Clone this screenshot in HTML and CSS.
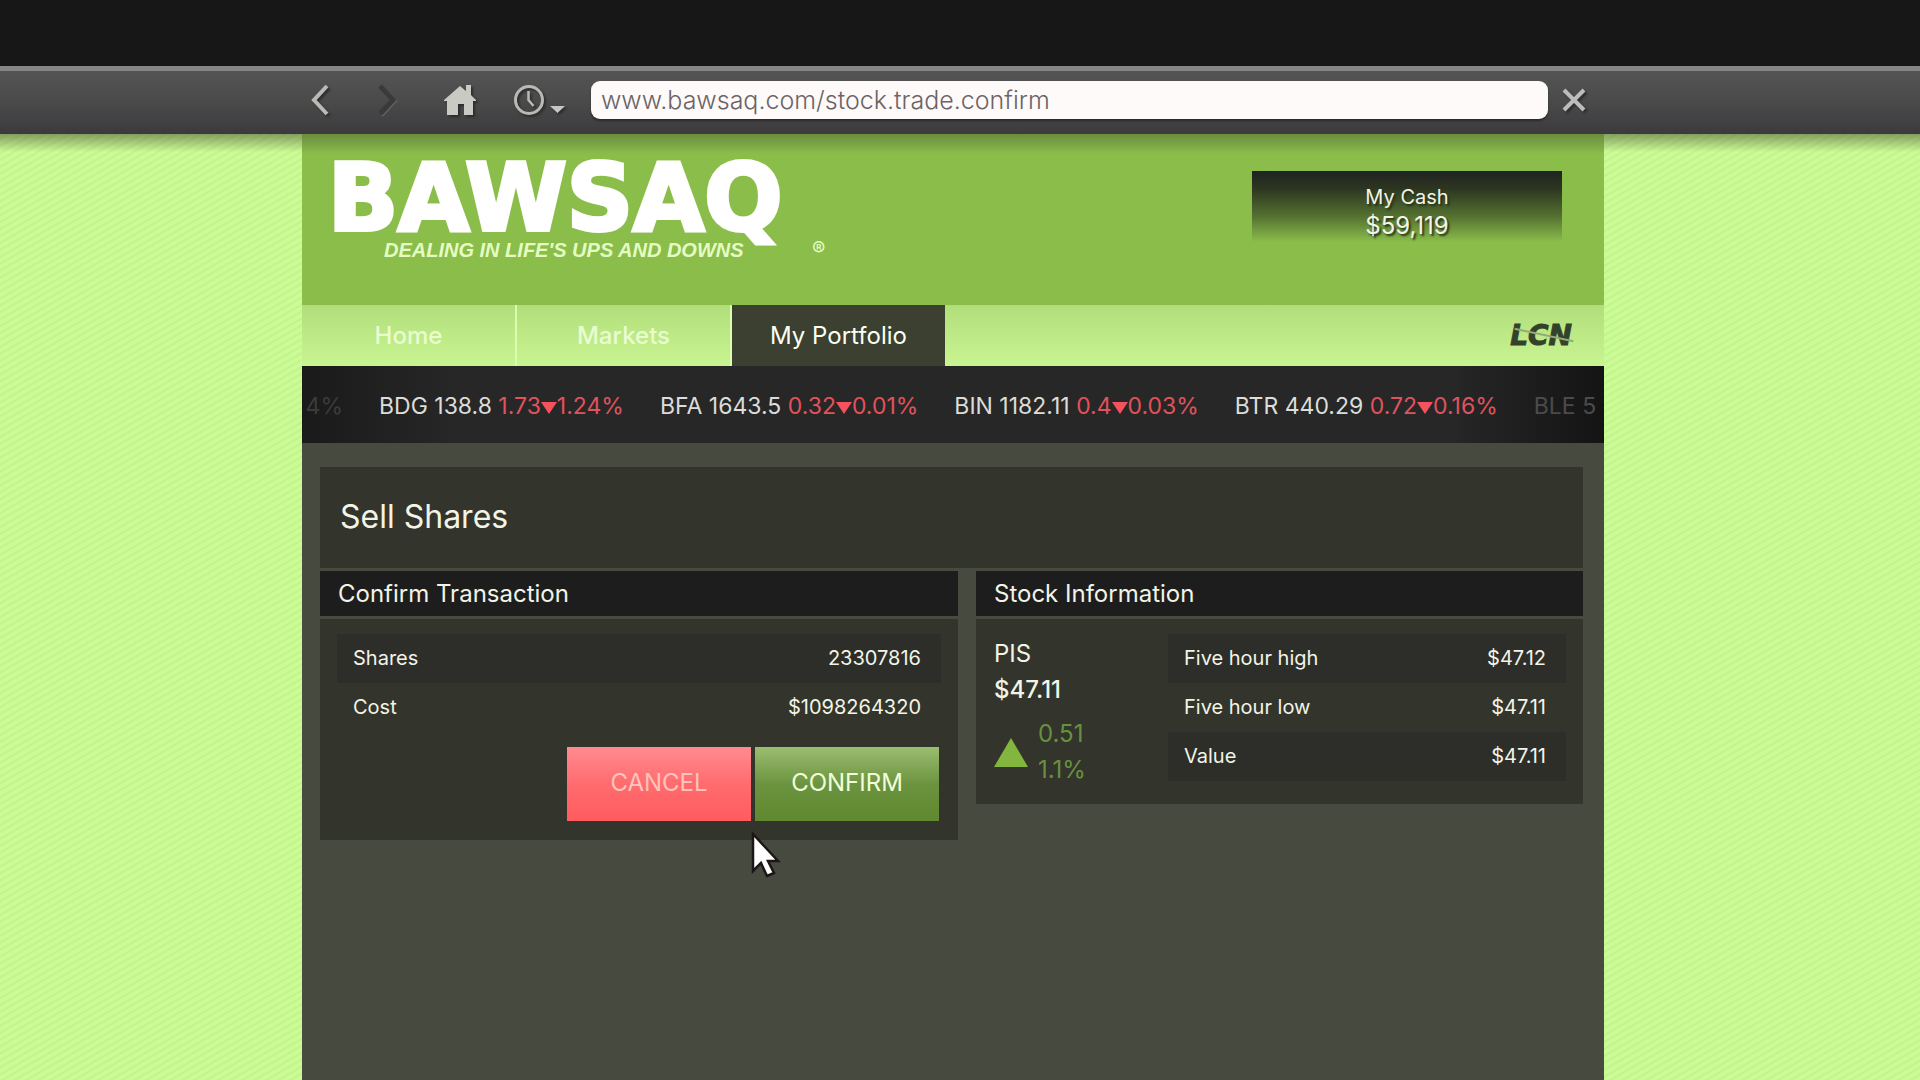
FILE: index.html
```html
<!DOCTYPE html>
<html lang="en">
<head>
<meta charset="utf-8">
<title>BAWSAQ - Sell Shares</title>
<link rel="stylesheet" href="styles.css">
</head>
<body>
<div class="letterbox"></div>
<header class="browser">
  <div class="browser-inner">
    <button class="tool back" type="button" aria-label="Back">
      <svg width="24" height="36" viewBox="0 0 24 36"><path d="M19 4 6 18l13 14" fill="none" stroke="#b9bab6" stroke-width="4"/></svg>
    </button>
    <button class="tool forward" type="button" aria-label="Forward">
      <svg width="24" height="36" viewBox="0 0 24 36"><path d="M5 4l13 14L5 32" fill="none" stroke="#3b3a3b" stroke-width="5"/></svg>
    </button>
    <button class="tool home" type="button" aria-label="Home page">
      <svg width="34" height="34" viewBox="0 0 34 34"><path fill="#c9cac3" d="M1 17 17 3l6 5V2h5v10l5 5v1h-3v14h-9V21h-6v11H4V18H1z"/></svg>
    </button>
    <button class="tool history" type="button" aria-label="History">
      <svg width="52" height="34" viewBox="0 0 52 34"><circle cx="16" cy="17" r="13.500" fill="none" stroke="#b9bab6" stroke-width="3"/><path d="M15.500 8v9l5 6" fill="none" stroke="#b9bab6" stroke-width="2.500"/><path d="M37 23h15l-7.500 7z" fill="#c6c7c3"/></svg>
    </button>
    <input class="address" type="text" aria-label="Address" value="www.bawsaq.com/stock.trade.confirm">
    <button class="tool close" type="button" aria-label="Close">
      <svg width="24" height="24" viewBox="0 0 24 24"><path d="M2 2l20 20M22 2 2 22" fill="none" stroke="#bcbcbc" stroke-width="4"/></svg>
    </button>
  </div>
</header>

<div class="page">
  <main class="site">
    <div class="masthead">
      <div class="brand">
        <div class="brand-name">BAWSAQ</div>
        <div class="brand-line">DEALING IN LIFE'S UPS AND DOWNS</div>
        <span class="brand-mark">®</span>
      </div>
      <div class="cash">
        <span class="cash-label">My Cash</span>
        <span class="cash-value">$59,119</span>
      </div>
    </div>

    <nav class="tabs">
      <a class="tab" href="#home">Home</a>
      <a class="tab" href="#markets">Markets</a>
      <a class="tab active" href="#portfolio">My Portfolio</a>
      <a class="lcn" href="#lcn">LCN</a>
    </nav>

    <div class="ticker">
      <span class="quote lead">4%</span>
      <span class="quote">BDG 138.8 <span class="down">1.73<i class="arrow-down"></i>1.24%</span></span>
      <span class="quote">BFA 1643.5 <span class="down">0.32<i class="arrow-down"></i>0.01%</span></span>
      <span class="quote">BIN 1182.11 <span class="down">0.4<i class="arrow-down"></i>0.03%</span></span>
      <span class="quote">BTR 440.29 <span class="down">0.72<i class="arrow-down"></i>0.16%</span></span>
      <span class="quote">BLE 5</span>
    </div>

    <div class="content">
      <h1 class="title">Sell Shares</h1>
      <div class="columns">
        <section class="card">
          <h2 class="card-head">Confirm Transaction</h2>
          <div class="card-body">
            <table class="figures">
              <tr><th scope="row">Shares</th><td>23307816</td></tr>
              <tr><th scope="row">Cost</th><td>$1098264320</td></tr>
            </table>
            <div class="actions">
              <button class="action cancel" type="button">CANCEL</button>
              <button class="action confirm" type="button">CONFIRM</button>
              <svg class="pointer" width="30" height="48" viewBox="0 0 30 48"><path d="M2 3v37l8-8 6 13 7-3-6-12h10z" fill="#fff" stroke="#1b1716" stroke-width="2.500"/></svg>
            </div>
          </div>
        </section>
        <section class="card">
          <h2 class="card-head">Stock Information</h2>
          <div class="card-body stock">
            <div class="symbol">
              <div>PIS</div>
              <div class="price">$47.11</div>
              <div class="change">
                <i class="arrow-up"></i>
                <div class="change-values"><span>0.51</span><span>1.1%</span></div>
              </div>
            </div>
            <table class="figures">
              <tr><th scope="row">Five hour high</th><td>$47.12</td></tr>
              <tr><th scope="row">Five hour low</th><td>$47.11</td></tr>
              <tr><th scope="row">Value</th><td>$47.11</td></tr>
            </table>
          </div>
        </section>
      </div>
    </div>
  </main>
</div>
</body>
</html>
```
FILE: styles.css
```css
* { box-sizing: border-box; }

body {
  margin: 0;
  min-height: 100vh;
  display: flex;
  flex-direction: column;
  font-family: Inter, "Liberation Sans", sans-serif;
  font-size: 24px;
  line-height: 36px;
  color: #f1f4e6;
  background: #171717;
}

h1, h2 { margin: 0; font-weight: 400; }
button { font-family: inherit; border: 0; padding: 0; }
a { text-decoration: none; }

.letterbox { height: 66px; }

/* Browser bar */
.browser {
  height: 68px;
  padding: 0 316px 0 302px;
  border-top: 5px solid #858585;
  background: linear-gradient(#545454, #4a4a4a 50%, #3c3a3d);
}
.browser-inner { display: flex; align-items: center; height: 58px; }
.tool { display: flex; background: none; filter: drop-shadow(2px 2px 1px #2c2c2c); }
.back { margin-left: 6px; }
.forward { margin-left: 43px; filter: drop-shadow(1px 1px 0 #626262); }
.home { margin-left: 44px; }
.history { margin-left: 36px; }
.address {
  flex: 1;
  min-width: 0;
  height: 38px;
  margin: 0 14px 0 26px;
  padding: 0 10px;
  border: 0;
  border-radius: 9px;
  background: #fffafa;
  box-shadow: 0 2px 2px #2b2b2b;
  color: #6b6466;
  font: 300 25px/38px Inter, "Liberation Sans", sans-serif;
}
.close { margin-right: 18px; }

/* Page */
.page {
  flex: 1;
  display: flex;
  padding: 0 316px 0 302px;
  background:
    linear-gradient(rgba(60, 70, 45, .5), rgba(60, 70, 45, 0)) top / 100% 18px no-repeat,
    repeating-linear-gradient(150deg, #cbfb95 0 3px, #c3f38d 4px 5px, #cbfb95 6px);
}
.site { flex: 1; min-width: 0; background: #474b3f; }

.masthead {
  display: flex;
  justify-content: space-between;
  align-items: flex-start;
  height: 171px;
  padding: 37px 42px 0 26px;
  background: linear-gradient(#6b8c3f, #8bbd4b 20px);
}
.brand { position: relative; color: #fff; }
.brand-name {
  height: 67px;
  font-family: "DejaVu Sans", sans-serif;
  font-weight: 700;
  font-size: 92px;
  line-height: 56px;
  -webkit-text-stroke: 4px #fff;
}
.brand-line {
  padding-left: 56px;
  color: #e4fcc4;
  font: italic 700 20px/24px "Liberation Sans", sans-serif;
}
.brand-mark {
  position: absolute;
  left: 484px;
  top: 60px;
  color: #e4fcc4;
  font-size: 20px;
}
.cash {
  display: flex;
  flex-direction: column;
  align-items: center;
  width: 310px;
  height: 71px;
  padding-top: 12px;
  background: linear-gradient(#1f2320, #2d3620 25%, #567331 65%, #8bbd4b);
  text-shadow: 2px 2px 2px #26301a;
}
.cash-label { font-size: 20px; line-height: 28px; }
.cash-value { line-height: 30px; }

.tabs {
  display: flex;
  height: 61px;
  background: linear-gradient(#b1de7b, #c9f492);
}
.tab {
  width: 215px;
  border-right: 2px solid #dcfcae;
  text-align: center;
  line-height: 61px;
  color: #e9fdd0;
  font-weight: 500;
}
.tab.active { width: 213px; border: 0; background: #3c4030; color: #fbfff2; font-weight: 400; }
.lcn {
  position: relative;
  margin-left: auto;
  padding-right: 32px;
  color: #33422b;
  font: italic 700 28px/61px "DejaVu Sans", sans-serif;
  -webkit-text-stroke: 1px #33422b;
}
/* Pale streak across the letters */
.lcn::after {
  content: "";
  position: absolute;
  left: 4px;
  top: 29px;
  width: 60px;
  height: 2px;
  background: #93aa78;
  transform: rotate(12deg);
}

.ticker {
  display: flex;
  align-items: center;
  gap: 36px;
  height: 77px;
  padding-top: 3px;
  overflow: hidden;
  white-space: nowrap;
  background: linear-gradient(90deg, #1a1a1a, #272727 12%, #272727 88%, #141414);
  color: #dcdcd8;
  font-size: 23px;
}
.quote { flex: none; }
.quote.lead { width: 41px; text-align: right; color: #3b3b3b; }
.quote:last-child { color: #4b4b4b; }
.down { color: #e0525c; }
.arrow-down {
  display: inline-block;
  border: solid transparent;
  border-width: 12px 8px 0;
  border-top-color: #f4525c;
}

/* Content */
.content { padding: 24px 21px 0 18px; }
.title {
  height: 101px;
  padding: 0 20px;
  background: #33342b;
  font-size: 32px;
  line-height: 99px;
}
.columns {
  display: grid;
  grid-template-columns: 638fr 607fr;
  gap: 18px;
  align-items: start;
  margin-top: 3px;
}
.card-head {
  height: 45px;
  margin-bottom: 3px;
  padding: 0 18px;
  background: #1e1d1e;
  line-height: 45px;
  font-size: 24px;
}
.card-body { padding: 15px 17px 19px; background: #33342b; }
.figures { width: 100%; border-collapse: collapse; font-size: 20px; line-height: 24px; }
.figures tr:nth-child(odd) { background: #2d2e29; }
.figures th { height: 49px; padding: 0 16px 2px; text-align: left; font-weight: 400; }
.figures td { padding: 0 20px 2px; text-align: right; }

.actions {
  position: relative;
  display: flex;
  justify-content: flex-end;
  gap: 4px;
  margin-top: 15px;
  padding-right: 2px;
}
.action { width: 184px; height: 74px; padding-bottom: 3px; font-size: 24px; }
.cancel { background: linear-gradient(#ff8b8f, #ff6c6f 50%, #ff5c5f); color: #ffc3bd; }
.confirm { background: linear-gradient(#9bbd70, #6c9440 50%, #5f882f); color: #f0ffd8; }
.pointer { position: absolute; right: 160px; top: 84px; }

.stock { display: flex; align-items: flex-start; padding-bottom: 16px; }
.symbol { flex: none; width: 175px; padding: 2px 0 0 1px; }
.price { font-weight: 500; }
.change { display: flex; align-items: center; gap: 10px; margin-top: 8px; color: #68903f; }
.change-values { display: flex; flex-direction: column; }
.arrow-up {
  border: solid transparent;
  border-width: 0 17px 29px;
  border-bottom-color: #83b63f;
}
```
